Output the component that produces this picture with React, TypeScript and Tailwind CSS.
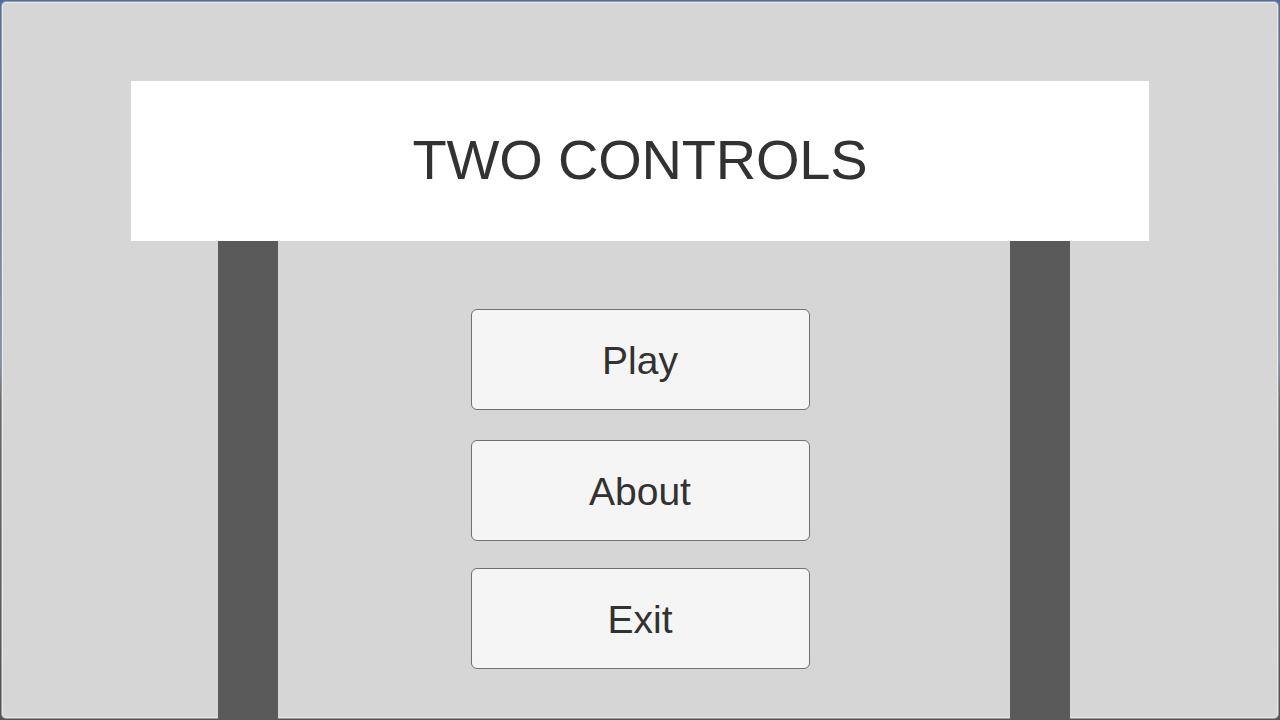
import React from "react";

export default function App() {
  const btn =
    "w-[339px] h-[101px] bg-[#f5f5f5] border border-[#707070] rounded-[6px] flex items-center justify-center text-[39px] text-[#323232] leading-none pt-[2px]";
  return (
    <div
      className="w-[1280px] h-[720px] p-[2px] bg-[linear-gradient(to_bottom,#4f6e9e_0%,#7f93b3_50%,#6b6864_56%,#55524f_100%)]"
      style={{ fontFamily: '"Liberation Sans", Arial, sans-serif' }}
    >
      <div className="w-full h-full bg-[#d6d6d6] rounded-[4px] border border-[#e9e9e9] shadow-[0_0_0_1px_#9a9a9a] flex flex-col">
        <div className="mt-[78px] self-center w-[1018px] h-[160px] bg-white flex items-center justify-center text-[56px] tracking-[-0.2px] text-[#323232] leading-none pb-[2px] shrink-0">
          TWO CONTROLS
        </div>
        <div className="flex-1 flex">
          <div className="w-[215px] shrink-0" />
          <div className="w-[60px] bg-[#5a5a5a] shrink-0 -mb-[3px]" />
          <div className="flex-1 flex flex-col items-center pt-[68px] gap-[30px] pr-[8px]">
            <div className={btn}>Play</div>
            <div className={btn}>About</div>
            <div className={`${btn} -mt-[3px]`}>Exit</div>
          </div>
          <div className="w-[60px] bg-[#5a5a5a] shrink-0 -mb-[3px]" />
          <div className="w-[207px] shrink-0" />
        </div>
      </div>
    </div>
  );
}
